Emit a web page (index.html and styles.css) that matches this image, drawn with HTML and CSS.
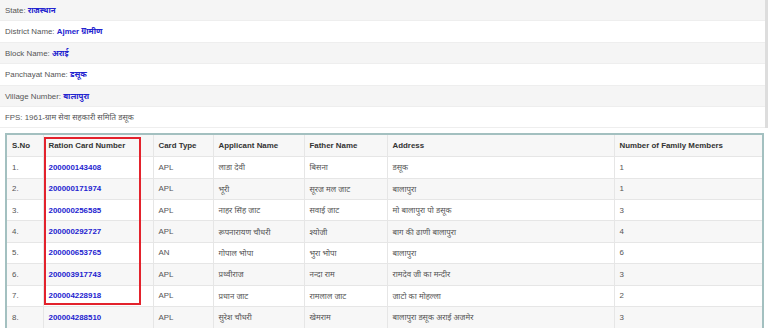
FILE: index.html
```html
<!DOCTYPE html>
<html lang="en">
<head>
    <meta charset="UTF-8">
    <title>Ration Card Details</title>
    <link rel="stylesheet" href="styles.css">
</head>
<body>
    <div class="info">
        <div class="info-row">State: <b>राजस्थान</b></div>
        <div class="info-row">District Name: <b>Ajmer ग्रामीण</b></div>
        <div class="info-row">Block Name: <b>अराई</b></div>
        <div class="info-row">Panchayat Name: <b>डसूक</b></div>
        <div class="info-row">Village Number: <b>बालापुरा</b></div>
        <div class="info-row">FPS: 1961-ग्राम सेवा सहकारी समिति डसूक</div>
    </div>

    <div class="table-wrap">
        <table>
            <colgroup>
                <col class="c-sno">
                <col class="c-card">
                <col class="c-type">
                <col class="c-name">
                <col class="c-father">
                <col class="c-addr">
                <col>
            </colgroup>
            <thead>
                <tr>
                    <th>S.No</th>
                    <th>Ration Card Number</th>
                    <th>Card Type</th>
                    <th>Applicant Name</th>
                    <th>Father Name</th>
                    <th>Address</th>
                    <th>Number of Family Members</th>
                </tr>
            </thead>
            <tbody>
                <tr><td>1.</td><td><a href="#">200000143408</a></td><td>APL</td><td>लाडा देवी</td><td>बिसना</td><td>डसूक</td><td>1</td></tr>
                <tr><td>2.</td><td><a href="#">200000171974</a></td><td>APL</td><td>भूरी</td><td>सूरज मल जाट</td><td>बालापुरा</td><td>1</td></tr>
                <tr><td>3.</td><td><a href="#">200000256585</a></td><td>APL</td><td>नाहर सिंह जाट</td><td>सवाई जाट</td><td>मो बालापुरा पो डसूक</td><td>3</td></tr>
                <tr><td>4.</td><td><a href="#">200000292727</a></td><td>APL</td><td>रूपनारायण चौधरी</td><td>श्योजी</td><td>बाग की ढाणी बालापुरा</td><td>4</td></tr>
                <tr><td>5.</td><td><a href="#">200000653765</a></td><td>AN</td><td>गोपाल भोपा</td><td>भुरा भोपा</td><td>बालापुरा</td><td>6</td></tr>
                <tr><td>6.</td><td><a href="#">200003917743</a></td><td>APL</td><td>प्रथ्वीराज</td><td>नन्दा राम</td><td>रामदेव जी का मन्दीर</td><td>3</td></tr>
                <tr><td>7.</td><td><a href="#">200004228918</a></td><td>APL</td><td>प्रधान जाट</td><td>रामलाल जाट</td><td>जाटो का मोहल्ला</td><td>2</td></tr>
                <tr><td>8.</td><td><a href="#">200004288510</a></td><td>APL</td><td>सुरेश चौधरी</td><td>खेमराम</td><td>बालापुरा डसूक अराई अजमेर</td><td>3</td></tr>
            </tbody>
        </table>
        <div class="highlight"></div>
    </div>
</body>
</html>
```

FILE: styles.css
```css
body {
    margin: 0;
    font-family: "Liberation Sans", Arial, "Noto Sans", sans-serif;
    font-size: 7.9px;
    color: #555;
    background: #fff;
}
.info {
    width: 765px;
    border-right: 3px solid #ddd;
}
.info-row {
    height: 21.4px;
    line-height: 21.4px;
    padding-left: 5px;
    border-bottom: 1px solid #eee;
    box-sizing: border-box;
}
.info-row:nth-child(odd) {
    background: #f5f5f5;
}
.info-row b {
    color: #2323cf;
}
.table-wrap {
    position: relative;
    margin: 5px 0 0 5px;
    width: 755px;
    border: 2px solid #a3c0c0;
    border-bottom: none;
}
table {
    width: 100%;
    border-collapse: collapse;
    table-layout: fixed;
}
.c-sno { width: 36px; }
.c-card { width: 110px; }
.c-type { width: 60px; }
.c-name { width: 91px; }
.c-father { width: 83px; }
.c-addr { width: 227px; }
th, td {
    height: 21.4px;
    padding: 0 5px;
    text-align: left;
    white-space: nowrap;
    overflow: hidden;
    border-left: 1px solid #e6e6e6;
    border-top: 1px solid #e6e6e6;
    box-sizing: border-box;
}
th:first-child, td:first-child {
    border-left: none;
}
th {
    color: #333;
    font-weight: bold;
    background: #f7f7f7;
    border-top: none;
}
tbody tr:nth-child(even) {
    background: #f7f7f7;
}
td a {
    color: #2323cf;
    font-weight: bold;
    text-decoration: none;
}
.highlight {
    position: absolute;
    left: 37px;
    top: 2px;
    width: 93px;
    height: 164px;
    border: 2px solid #e3222c;
}
```
